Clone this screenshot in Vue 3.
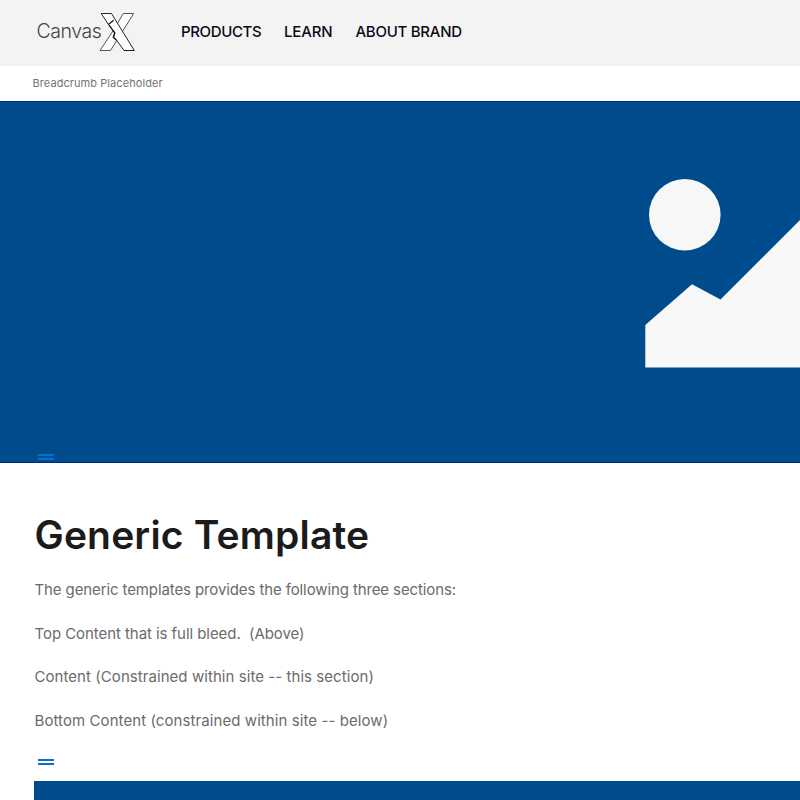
<script setup>
const nav = [
  { label: 'PRODUCTS', cls: 'products' },
  { label: 'LEARN', cls: 'learn' },
  { label: 'ABOUT BRAND', cls: 'about' },
]
const lines = [
  { text: 'The generic templates provides the following three sections:', cls: 'l1' },
  { text: 'Top Content that is full bleed.\u00a0 (Above)', cls: 'l2' },
  { text: 'Content (Constrained within site -- this section)', cls: 'l3' },
  { text: 'Bottom Content (constrained within site -- below)', cls: 'l4' },
]
</script>

<template>
  <div class="page">
    <header class="header">
      <div class="logo">
        <span class="word">Canvas</span>
        <svg class="mark" width="37" height="42" viewBox="99 11 37 42">
          <path class="back" d="M123.2 13.5H133.7L110.5 50.5H100L114 29.5Z" />
          <path class="front" d="M101.2 13.5H111.5L134.3 50.5H124L116.5 40L113.5 37.5L115 32.8L108.5 24.5Z" />
          <path class="seam" d="M108.3 24.5L113.7 20.3M109 25L114.7 32.8L113.3 37.3L116.3 40" />
        </svg>
      </div>
      <nav class="nav">
        <a v-for="n in nav" :key="n.label" :class="n.cls">{{ n.label }}</a>
      </nav>
    </header>
    <div class="crumb"><span>Breadcrumb Placeholder</span></div>
    <section class="hero">
      <svg class="art" width="155" height="190" viewBox="645 178 155 190">
        <circle cx="684.8" cy="214.7" r="35.8" />
        <path d="M645.3 325L692 284.3L720.5 299.6L800 220V367.5H645.3Z" />
      </svg>
      <div class="bars"><i></i><i></i></div>
    </section>
    <main class="content">
      <h1>Generic Template</h1>
      <p v-for="l in lines" :key="l.cls" :class="l.cls">{{ l.text }}</p>
      <div class="bars"><i></i><i></i></div>
      <div class="bottom"></div>
    </main>
  </div>
</template>

<style>
body { background: #fff; }
</style>
<style scoped>
.page { width: 100%; height: 800px; overflow: hidden; font-family: Inter, "Liberation Sans", sans-serif; color: #6b6b6b; }
.header { height: 66px; box-sizing: border-box; background: #f3f3f3; display: flex; align-items: center; padding: 0 0 2px 37px; }
.logo { display: flex; align-items: center; width: 144px; }
.word { width: 62px; margin: -3px 0 0 -0.5px; padding-right: 0.5px; font: 300 19.5px/24px Inter, "Liberation Sans", sans-serif; letter-spacing: -0.45px; color: #444; white-space: nowrap; }
.mark { display: block; flex: none; }
.back, .front { fill: #fff; stroke: #555; stroke-width: 1; }
.front { stroke: #222; }
.seam { fill: none; stroke: #111; stroke-width: 1.2; }
.nav { display: flex; font-size: 15px; line-height: 20px; font-weight: 550; color: #0a0a14; white-space: nowrap; letter-spacing: -0.27px; }
.products { width: 103px; letter-spacing: -0.36px; }
.learn { width: 71.5px; letter-spacing: -0.15px; }
.crumb { height: 35px; box-sizing: border-box; padding: 9px 0 0 32.5px; font-size: 11px; line-height: 16px; letter-spacing: 0.07px; white-space: nowrap; color: #747474; }
.hero { height: 362px; box-sizing: border-box; background: #004b8b; border: solid #002878; border-width: 1px 0; display: flex; flex-direction: column; justify-content: space-between; padding-top: 76px; }
.art { display: block; align-self: flex-end; fill: #f7f7f7; }
.bars { display: flex; flex-direction: column; gap: 2px; width: 16px; margin-left: 38px; }
.bars i { display: block; height: 2px; background: #0073d1; }
.hero .bars { margin-bottom: 2px; }
.content { padding: 48px 0 0 34px; }
h1 { margin: 0 0 21px; padding-left: 0.5px; font-size: 39px; line-height: 48px; font-weight: 600; letter-spacing: 0.17px; color: #1b1b1b; white-space: nowrap; }
p { margin: 0; padding-left: 0.5px; height: 43.7px; font-size: 15px; line-height: 20px; white-space: pre; }
.l1 { letter-spacing: -0.11px; }
.l2 { letter-spacing: -0.06px; }
.l3 { letter-spacing: 0.06px; }
.l4 { letter-spacing: 0.08px; }
.content .bars { margin: 4px 0 16px 4px; }
.content .bars i { background: #0b6cc9; }
.bottom { height: 40px; background: #004b8b; }
</style>
